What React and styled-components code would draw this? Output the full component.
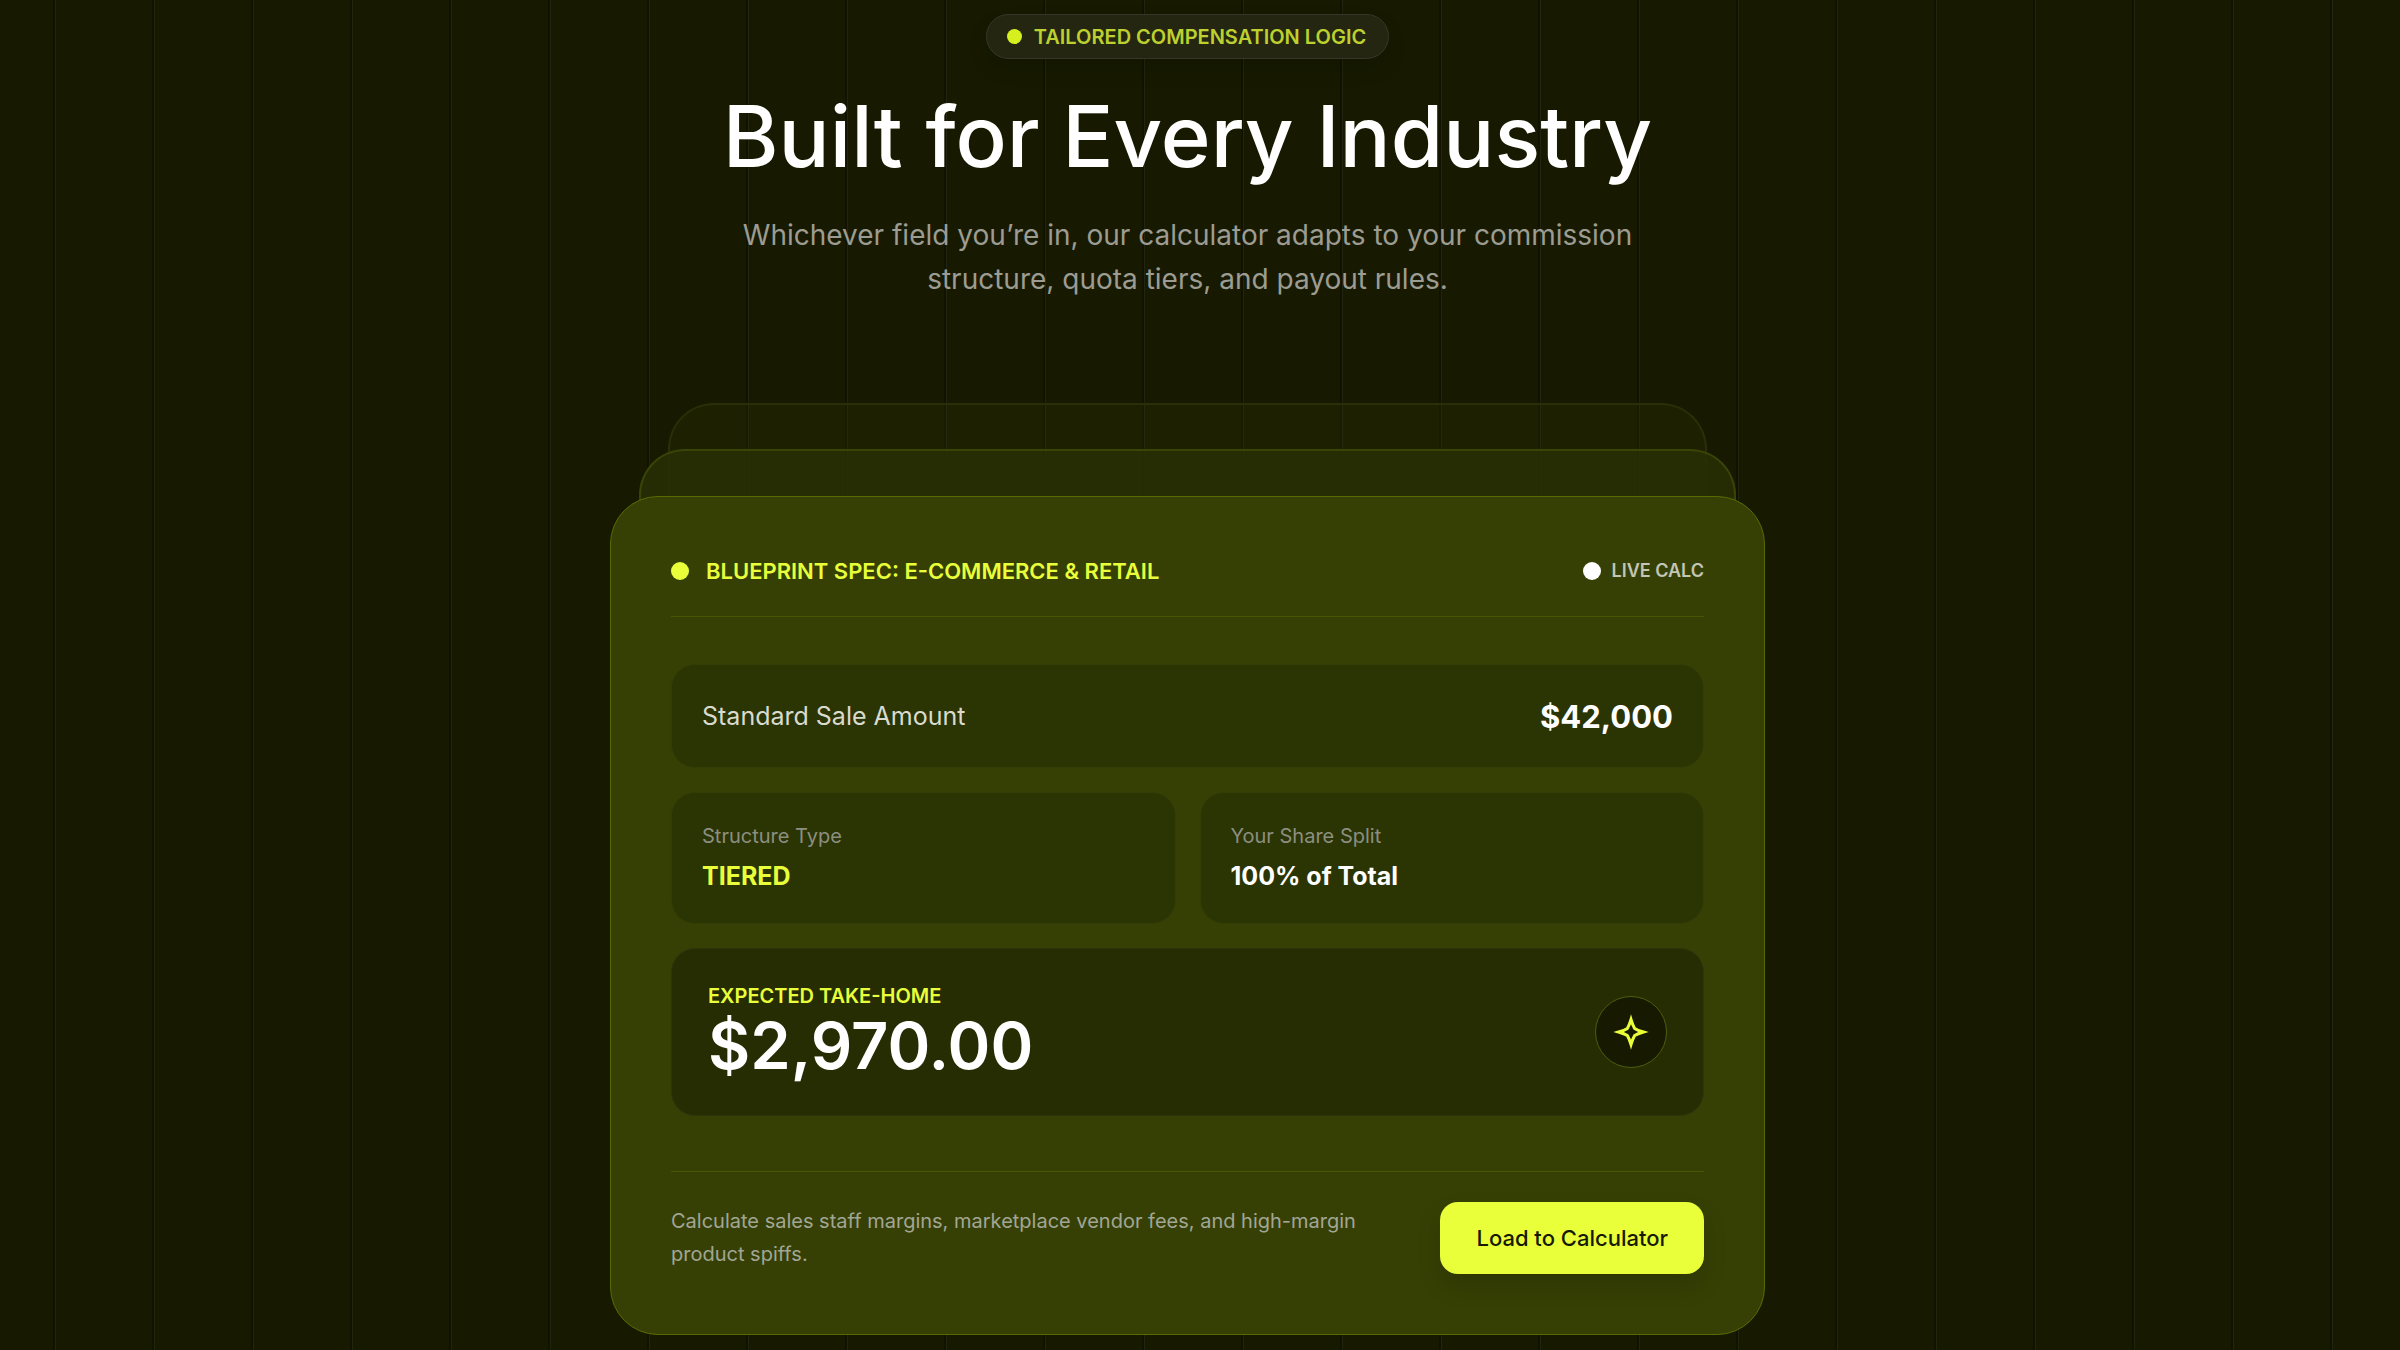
import styled, { createGlobalStyle } from "styled-components";

const GlobalStyle = createGlobalStyle`
	:root {
		--color-bg: #171a00;
		--color-card: #364004;
		--color-lime: #e8ff3a;
		--color-white: #ffffff;
		--color-muted: #9c9c93;
		--font-main: Inter, "Liberation Sans", sans-serif;
	}

	* {
		box-sizing: border-box;
		margin: 0;
	}

	body {
		background-color: var(--color-bg);
		color: var(--color-white);
		font-family: var(--font-main);
	}

	button {
		font-family: inherit;
	}
`;

const Page = styled.main`
	min-height: 100vh;
	padding: 14px 25px 14px 0;
	display: flex;
	flex-direction: column;
	align-items: center;
	background-image: repeating-linear-gradient(
		to right,
		transparent 0 53px,
		#111300 53px 55px,
		#22250f 55px 56px,
		transparent 56px 99px
	);
`;

const Pill = styled.div`
	display: flex;
	align-items: center;
	gap: 12px;
	height: 45px;
	padding: 0 22px 0 20px;
	border: 1px solid #35372a;
	border-radius: 24px;
	background-color: #242611;
	box-shadow: 0 10px 20px rgba(0, 0, 0, 0.12);
	color: #bdd02f;
	font-size: 20px;
	font-weight: 600;
	text-transform: uppercase;
`;

const Dot = styled.span`
	flex: none;
	width: ${(props) => props.$size}px;
	height: ${(props) => props.$size}px;
	border-radius: 50%;
	background-color: ${(props) => props.$color};
`;

const Title = styled.h1`
	margin-top: 28px;
	font-size: 85px;
	font-weight: 500;
	line-height: 100px;
	text-align: center;
`;

const Lead = styled.p`
	max-width: 960px;
	margin-top: 26px;
	color: var(--color-muted);
	font-size: 28px;
	line-height: 44px;
	text-align: center;
`;

const Stack = styled.section`
	display: grid;
	justify-items: center;
	width: 100%;
	max-width: 1155px;
	margin-top: 102px;

	& > * {
		grid-area: 1 / 1;
	}
`;

const Layer = styled.div`
	width: ${(props) => props.$width};
	height: 110px;
	margin-top: ${(props) => props.$top}px;
	border: 2px solid ${(props) => props.$border};
	border-bottom: none;
	border-radius: 46px 46px 0 0;
	background-color: ${(props) => props.$fill};
`;

const Card = styled.article`
	z-index: 1;
	width: 100%;
	margin-top: 93px;
	padding: 56px 60px 60px;
	border: 1px solid #5a6a02;
	border-radius: 48px;
	background-color: var(--color-card);
`;

const CardHeader = styled.header`
	display: flex;
	justify-content: space-between;
	align-items: center;
	padding-bottom: 27px;
	border-bottom: 1px solid #485503;
`;

const Tag = styled.div`
	display: flex;
	align-items: center;
	gap: ${(props) => props.$gap}px;
	color: ${(props) => props.$color};
	font-size: ${(props) => props.$size}px;
	font-weight: 600;
	line-height: 36px;
	text-transform: uppercase;
`;

const Rows = styled.div`
	display: grid;
	grid-template-columns: 1fr 1fr;
	gap: 24px;
	margin: 47px 0 55px;
`;

const Box = styled.div`
	padding: 30px;
	border: 1px solid #333d06;
	border-radius: 24px;
	background-color: #2b3403;
`;

const WideBox = styled(Box)`
	grid-column: 1 / -1;
	display: flex;
	justify-content: space-between;
	align-items: center;
	height: 104px;
`;

const SmallBox = styled(Box)`
	height: 132px;
	padding: 28px 30px;
`;

const ResultBox = styled(WideBox)`
	height: 168px;
	padding: 32px 36px;
	border-color: #2d360a;
	background-color: #262d03;
`;

const SaleLabel = styled.span`
	color: #d9dbcf;
	font-size: 25px;
`;

const SaleAmount = styled.span`
	font-size: 31px;
	font-weight: 700;
`;

const Label = styled.p`
	color: #8c8f80;
	font-size: 20px;
	line-height: 30px;
`;

const Value = styled.p`
	margin-top: 8px;
	color: ${(props) => props.$color};
	font-size: 25px;
	font-weight: 700;
	line-height: 34px;
`;

const ResultLabel = styled.p`
	color: var(--color-lime);
	font-size: 20px;
	font-weight: 600;
	line-height: 28px;
	text-transform: uppercase;
`;

const ResultAmount = styled.p`
	font-size: 65px;
	font-weight: 600;
	line-height: 72px;
`;

const IconCircle = styled.div`
	display: flex;
	justify-content: center;
	align-items: center;
	width: 72px;
	height: 72px;
	border: 1px solid #4f5c0c;
	border-radius: 50%;
	background-color: var(--color-bg);
`;

const CardFooter = styled.footer`
	display: flex;
	justify-content: space-between;
	align-items: center;
	gap: 48px;
	padding-top: 30px;
	border-top: 1px solid #485503;
`;

const Note = styled.p`
	max-width: 720px;
	color: #a2a695;
	font-size: 20px;
	line-height: 33px;
`;

const LoadButton = styled.button`
	flex: none;
	height: 72px;
	padding: 0 36px;
	border: none;
	border-radius: 18px;
	background-color: var(--color-lime);
	box-shadow: 0 12px 24px rgba(0, 0, 0, 0.14);
	color: var(--color-bg);
	font-size: 22px;
	font-weight: 500;
	cursor: pointer;
`;

function SparkIcon() {
	return (
		<svg width="36" height="36" viewBox="-18 -18 36 36" aria-hidden="true">
			<path
				d="M0 -12.5 Q1.8 -6.5 3.6 -3.6 Q6.5 -1.8 12.5 0 Q6.5 1.8 3.6 3.6 Q1.8 6.5 0 12.5 Q-1.8 6.5 -3.6 3.6 Q-6.5 1.8 -12.5 0 Q-6.5 -1.8 -3.6 -3.6 Q-1.8 -6.5 0 -12.5Z"
				fill="none"
				stroke="#e8ff3a"
				strokeWidth="3"
				strokeMiterlimit="10"
			/>
		</svg>
	);
}

const App = () => {
	return (
		<>
			<GlobalStyle />
			<Page>
				<Pill>
					<Dot $size={15} $color="#d6ef1e" />
					Tailored Compensation Logic
				</Pill>
				<Title>Built for Every Industry</Title>
				<Lead>
					Whichever field you’re in, our calculator adapts to your commission structure, quota tiers, and payout rules.
				</Lead>

				<Stack>
					<Layer $width="90%" $top={0} $border="#2a2f08" $fill="rgba(54, 64, 4, 0.2)" />
					<Layer $width="95%" $top={46} $border="#3a4407" $fill="rgba(39, 46, 4, 0.92)" />
					<Card>
						<CardHeader>
							<Tag $gap={17} $size={22} $color="var(--color-lime)">
								<Dot $size={18} $color="var(--color-lime)" />
								Blueprint Spec: E-Commerce &amp; Retail
							</Tag>
							<Tag $gap={10} $size={18} $color="#c3c6b4">
								<Dot $size={18} $color="var(--color-white)" />
								Live Calc
							</Tag>
						</CardHeader>

						<Rows>
							<WideBox>
								<SaleLabel>Standard Sale Amount</SaleLabel>
								<SaleAmount>$42,000</SaleAmount>
							</WideBox>
							<SmallBox>
								<Label>Structure Type</Label>
								<Value $color="var(--color-lime)">TIERED</Value>
							</SmallBox>
							<SmallBox>
								<Label>Your Share Split</Label>
								<Value $color="var(--color-white)">100% of Total</Value>
							</SmallBox>
							<ResultBox>
								<div>
									<ResultLabel>Expected Take-Home</ResultLabel>
									<ResultAmount>$2,970.00</ResultAmount>
								</div>
								<IconCircle>
									<SparkIcon />
								</IconCircle>
							</ResultBox>
						</Rows>

						<CardFooter>
							<Note>Calculate sales staff margins, marketplace vendor fees, and high-margin product spiffs.</Note>
							<LoadButton type="button">Load to Calculator</LoadButton>
						</CardFooter>
					</Card>
				</Stack>
			</Page>
		</>
	);
};

export default App;
